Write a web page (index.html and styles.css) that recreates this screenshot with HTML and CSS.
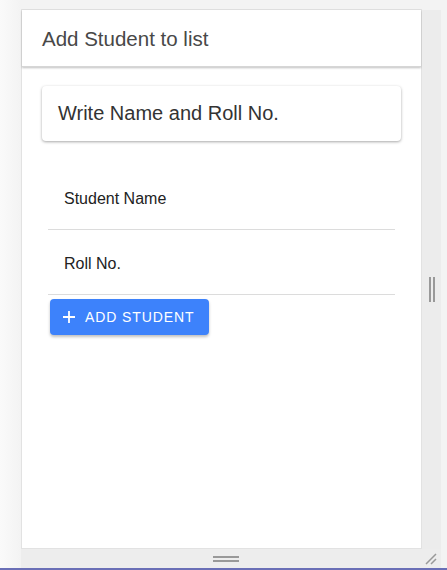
FILE: index.html
```html
<!DOCTYPE html>
<html>
<head>
<meta charset="utf-8">
<link rel="stylesheet" href="styles.css">
</head>
<body>
<div class="shell">
  <div class="top">
    <div class="card">
      <div class="header">Add Student to list</div>
      <div class="body">
        <div class="title-card">Write Name and Roll No.</div>
        <div class="field"><span class="label">Student Name</span></div>
        <div class="field"><span class="label">Roll No.</span></div>
        <button class="btn">
          <svg width="14" height="14" viewBox="0 0 14 14"><path d="M7 1v12M1 7h12" stroke="#fff" stroke-width="1.8" fill="none"/></svg>
          <span>ADD STUDENT</span>
        </button>
      </div>
    </div>
    <div class="gutter"><span class="vgrip"></span></div>
  </div>
  <div class="bottombar">
    <span class="hgrip"></span>
    <svg class="corner" width="12" height="12" viewBox="0 0 12 12"><path d="M1 11L11 1M6 11L11 6" stroke="#999" stroke-width="1.5" fill="none"/></svg>
  </div>
</div>
<div class="baseline"></div>
</body>
</html>
```
FILE: styles.css
```css
html, body {
  margin: 0;
  height: 100%;
}
body {
  background: linear-gradient(to right, #fafafa 0px, #f3f3f3 21px, #f3f3f3 100%);
  font-family: "Liberation Sans", Arial, sans-serif;
  overflow: hidden;
}
.shell {
  margin-left: 21px;
  padding-top: 9px;
  width: 420px;
}
.top {
  display: flex;
}
.card {
  width: 399px;
  height: 538px;
  background: #fff;
  border: 1px solid #e2e2e2;
  display: flex;
  flex-direction: column;
}
.gutter {
  width: 19px;
  margin-top: 1px;
  background: #ececec;
  display: flex;
  align-items: center;
  justify-content: center;
  padding-top: 20px;
}
.vgrip {
  width: 2px;
  height: 25px;
  border-left: 2px solid #999;
  border-right: 2px solid #999;
}
.header {
  height: 55px;
  padding-left: 20px;
  display: flex;
  align-items: center;
  font-size: 20.5px;
  color: #484848;
  box-shadow: 0 1px 2px rgba(0,0,0,0.25);
  border-bottom: 1px solid #d6d6d6;
  padding-top: 1px;
}
.body {
  padding: 19px 20px 0 20px;
  display: flex;
  flex-direction: column;
}
.title-card {
  height: 55px;
  border-radius: 4px;
  box-shadow: 0 1px 3px rgba(0,0,0,0.35);
  display: flex;
  align-items: center;
  padding-left: 16px;
  font-size: 20px;
  color: #333;
  margin-bottom: 24px;
}
.field {
  margin: 0 6px;
  border-bottom: 1px solid #dcdcdc;
  padding-left: 16px;
  display: flex;
  align-items: center;
  font-size: 16px;
  color: #222;
  padding-top: 4px;
  box-sizing: border-box;
  height: 65px;
}
.btn {
  margin: 4px 0 0 8px;
  align-self: flex-start;
  width: 159px;
  height: 36px;
  border: none;
  border-radius: 4px;
  background: #3d82fb;
  color: #fff;
  font-family: "Liberation Sans", Arial, sans-serif;
  font-size: 14px;
  font-weight: 500;
  letter-spacing: 0.9px;
  display: flex;
  align-items: center;
  padding: 0 0 0 12px;
  gap: 9px;
  box-shadow: 0 2px 3px rgba(0,0,0,0.25);
}
.bottombar {
  height: 19px;
  width: 420px;
  background: #ededed;
  display: flex;
  align-items: center;
  justify-content: center;
  position: relative;
}
.hgrip {
  width: 26px;
  height: 2px;
  border-top: 2px solid #999;
  border-bottom: 2px solid #999;
  margin-left: -10px;
}
.corner {
  position: absolute;
  right: 4px;
  bottom: 3px;
}
.baseline {
  height: 2px;
  background: #6a6fb6;
}
```
